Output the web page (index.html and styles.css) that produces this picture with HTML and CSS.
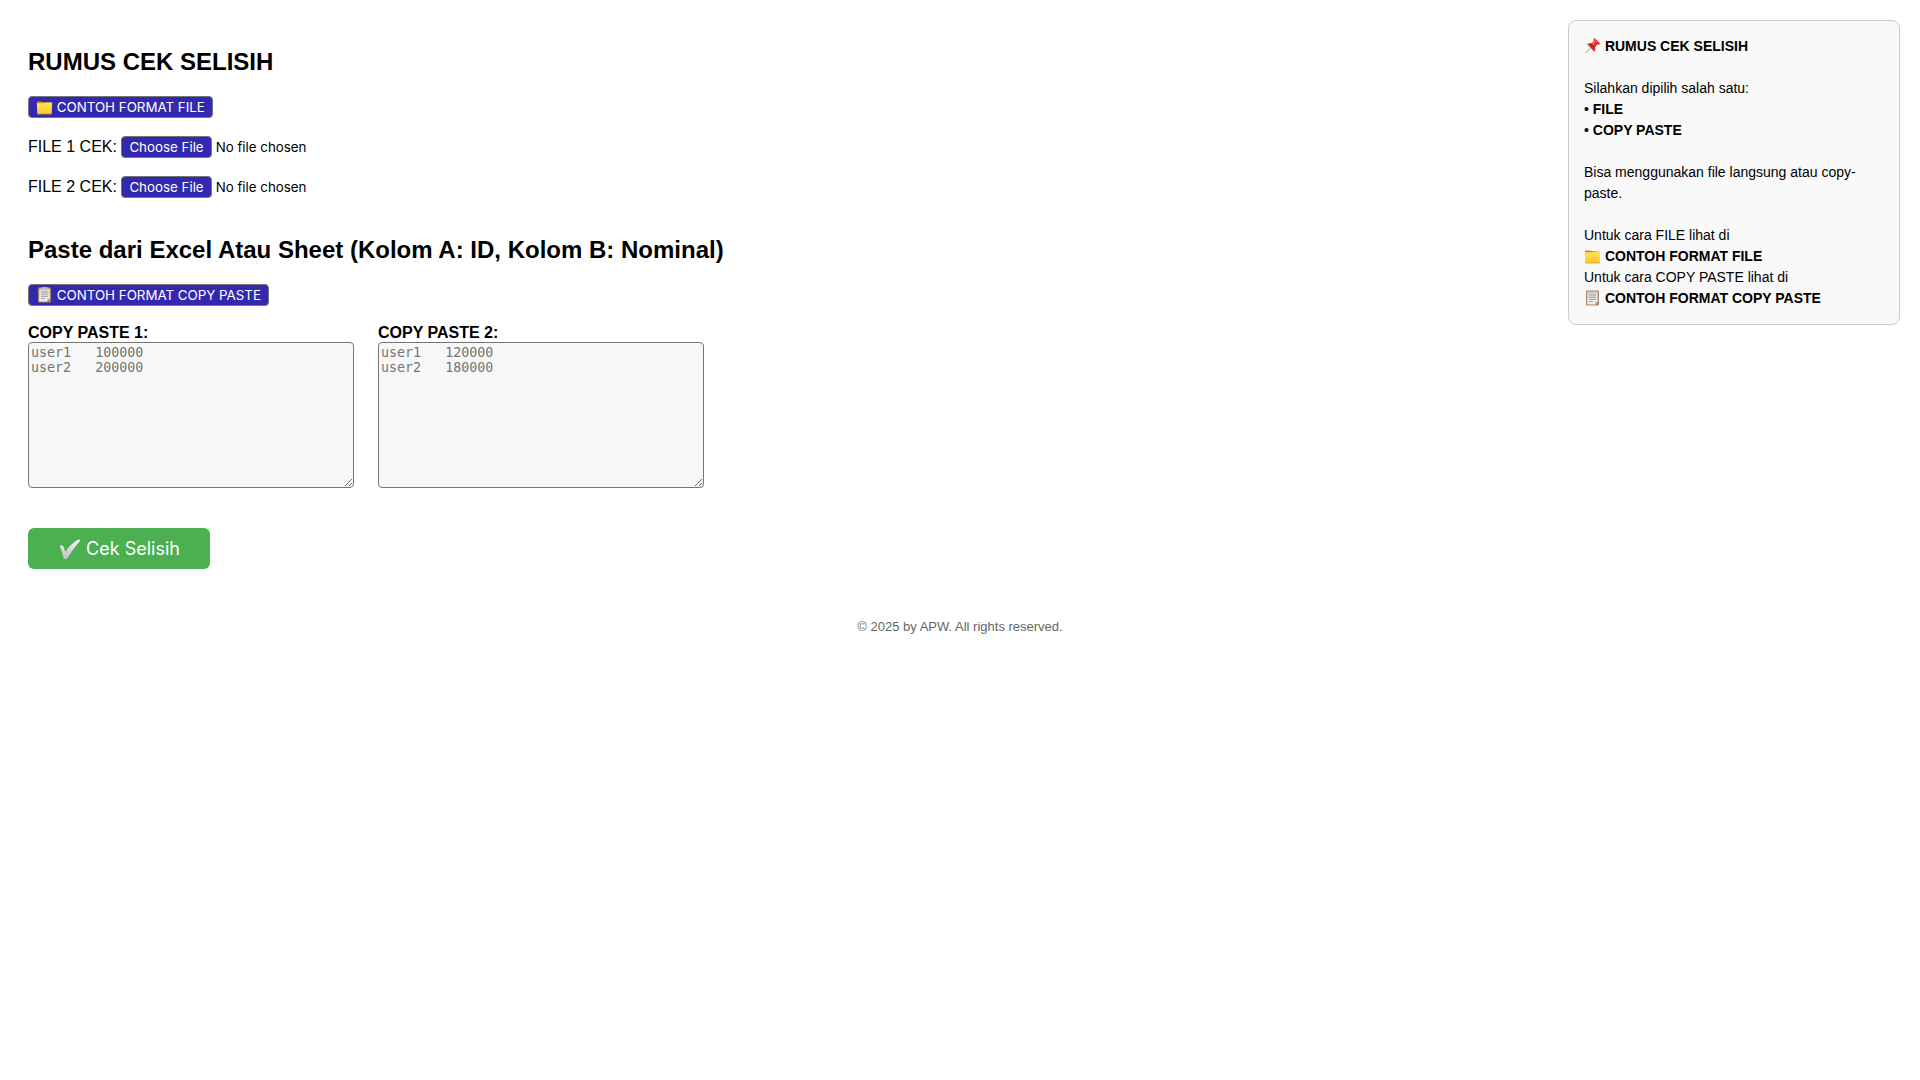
FILE: index.html
```html
<!DOCTYPE html>
<html lang="id">
<head>
<meta charset="UTF-8">
<meta name="viewport" content="width=device-width, initial-scale=1.0">
<title>RUMUS CEK SELISIH</title>
<link rel="stylesheet" href="styles.css">
</head>
<body>
<!-- icons -->
<svg class="sprite" aria-hidden="true">
  <defs>
    <linearGradient id="gFolder" x1="0" y1="0" x2="0" y2="1">
      <stop offset="0" stop-color="#ffe25a"/>
      <stop offset="1" stop-color="#fbc926"/>
    </linearGradient>
    <linearGradient id="gCheck" x1="0" y1="0" x2="0" y2="1">
      <stop offset="0" stop-color="#f6f6f6"/>
      <stop offset="1" stop-color="#bdbdbd"/>
    </linearGradient>
    <linearGradient id="gPaper" x1="0" y1="0" x2="0" y2="1">
      <stop offset="0" stop-color="#d6d6d6"/>
      <stop offset="1" stop-color="#f1f1f1"/>
    </linearGradient>
  </defs>
  <symbol id="folder" viewBox="0 0 17 17">
    <path d="M1 3.4h5.2l1 1h8.2v2H1z" fill="#d98a12"/>
    <path d="M7 4.2h5v1H7z" fill="#8a5a14"/>
    <path d="M.8 5.2h6.4l.9-.7h8.1l-.5 11.6H1.3z" fill="url(#gFolder)"/>
    <path d="M1.2 15.5h14.6v.9H1.2z" fill="#e09d1c"/>
  </symbol>
  <symbol id="clipboard" viewBox="0 0 17 17">
    <rect x="2" y="1.6" width="13" height="15" rx="1" fill="#a88468"/>
    <path d="M3.2 2.8h10.6v10l-2.6 2.6h-8z" fill="url(#gPaper)"/>
    <path d="M13.8 12.8h-2.6v2.6z" fill="#b5b5b5"/>
    <path d="M5 1.3h2.2Q8.5 0 9.8 1.3H12v2.4H5z" fill="#b9bcc0"/>
    <path d="M5 6h7M5 8.2h7M5 10.4h7M5 12.6h4" stroke="#9a9a9a" stroke-width=".9"/>
  </symbol>
  <symbol id="pin" viewBox="0 0 17 17">
    <path d="M6.2 10.3l1 1-5.3 4.9-.8.2.2-.8z" fill="#b9bcc0"/>
    <path d="M3.1 7.1q2-1.500 4.100-.6l2.600-2.600q-.7-1.700.6-3l6.100 5.600q-1.400 1.600-3.200 1l-2.200 2.700q.8 2.600-.8 4.500z" fill="#d92f2c"/>
    <path d="M8 6.500l2.700-2.800 1.300 1.100-2.900 2.900z" fill="#f4716a"/>
    <path d="M7.200 6.500q.8 2.700 3.900 3.700l-1 1Q6.700 9.700 5.800 6.500z" fill="#a91c20"/>
    <path d="M10.500 1.500q1 3 5 5" fill="none" stroke="#ee5a54" stroke-width="1"/>
  </symbol>
  <symbol id="check" viewBox="0 0 22 22">
    <path d="M1.300 8.200q1.800-1.700 3.600-.3l1.900 6Q12 6 19.800 1.600q2.200-.2 1.500 1.600Q14.800 10.500 8.600 20.500q-1.800 1.400-3.400 0Q4 14.500 1.300 8.200z" fill="url(#gCheck)"/>
  </symbol>
</svg>

<div class="page">
  <main class="main">
    <h2>RUMUS CEK SELISIH</h2>
    <button type="button" class="btn-format"><svg class="icon"><use href="#folder"/></svg> CONTOH FORMAT FILE</button>
    <form>
      <div class="file-row">
        <label for="file1">FILE 1 CEK:</label>
        <input type="file" id="file1">
      </div>
      <div class="file-row">
        <label for="file2">FILE 2 CEK:</label>
        <input type="file" id="file2">
      </div>

      <h2 class="paste-title">Paste dari Excel Atau Sheet (Kolom A: ID, Kolom B: Nominal)</h2>
      <button type="button" class="btn-format"><svg class="icon"><use href="#clipboard"/></svg> CONTOH FORMAT COPY PASTE</button>

      <div class="paste-container">
        <div>
          <label for="paste1">COPY PASTE 1:</label>
          <textarea id="paste1" placeholder="user1   100000
user2   200000"></textarea>
        </div>
        <div>
          <label for="paste2">COPY PASTE 2:</label>
          <textarea id="paste2" placeholder="user1   120000
user2   180000"></textarea>
        </div>
      </div>

      <button type="submit" class="btn-cek"><svg class="icon icon-check"><use href="#check"/></svg> Cek Selisih</button>
    </form>
  </main>

  <aside class="info-box">
    <svg class="icon"><use href="#pin"/></svg> <b>RUMUS CEK SELISIH</b><br><br>
    Silahkan dipilih salah satu:<br>
    • <b>FILE</b><br>
    • <b>COPY PASTE</b><br><br>
    Bisa menggunakan file langsung atau copy-paste.<br><br>
    Untuk cara FILE lihat di<br>
    <svg class="icon"><use href="#folder"/></svg> <b>CONTOH FORMAT FILE</b><br>
    Untuk cara COPY PASTE lihat di<br>
    <svg class="icon"><use href="#clipboard"/></svg> <b>CONTOH FORMAT COPY PASTE</b>
  </aside>
</div>
<footer>© 2025 by APW. All rights reserved.</footer>
</body>
</html>
```
FILE: styles.css
```css
body {
  margin: 0;
  padding: 20px;
  background: #fff;
  color: #000;
  font-family: "Liberation Sans", Arial, sans-serif;
  font-size: 16px;
}
.sprite {
  position: absolute;
  width: 0;
  height: 0;
}
.icon {
  width: 17px;
  height: 17px;
  vertical-align: -3px;
}
.page {
  display: flex;
  justify-content: space-between;
  align-items: flex-start;
}
.main {
  padding: 0 8px;
}
h2 {
  margin: 28px 0 20px;
  font-size: 24px;
  line-height: 28px;
}
.btn-format,
input[type="file"]::file-selector-button {
  padding: 1px 7px;
  border: 1px solid #767676;
  border-radius: 4px;
  background: #3329b0;
  color: #fff;
  font-family: Inter, sans-serif;
  line-height: 18px;
}
.btn-format {
  display: block;
}
.file-row {
  height: 22px;
  margin-top: 18px;
}
input[type="file"] {
  font-family: Inter, sans-serif;
}
.paste-title {
  margin-top: 38px;
}
.paste-container {
  display: flex;
  gap: 24px;
  margin-top: 18px;
}
.paste-container label {
  display: block;
  font-weight: bold;
  line-height: 18px;
}
textarea {
  display: block;
  box-sizing: border-box;
  width: 326px;
  height: 146px;
  padding: 2px;
  border: 1px solid #767676;
  border-radius: 4px;
  background: #f7f7f7;
  font-family: "DejaVu Sans Mono", monospace;
}
.btn-cek {
  margin-top: 40px;
  padding: 10px 30px;
  border: none;
  border-radius: 6px;
  background: #4caf50;
  color: #fff;
  font-family: Inter, sans-serif;
  font-size: 18px;
  line-height: 21px;
}
.icon-check {
  width: 23px;
  height: 22px;
  margin: -4px 0;
  vertical-align: -1px;
}
.info-box {
  box-sizing: border-box;
  width: 332px;
  padding: 15px;
  border: 1px solid #ccc;
  border-radius: 8px;
  background: #f9f9f9;
  font-size: 14px;
  line-height: 21px;
}
footer {
  margin-top: 50px;
  text-align: center;
  color: #666;
  font-size: 13px;
}
```
